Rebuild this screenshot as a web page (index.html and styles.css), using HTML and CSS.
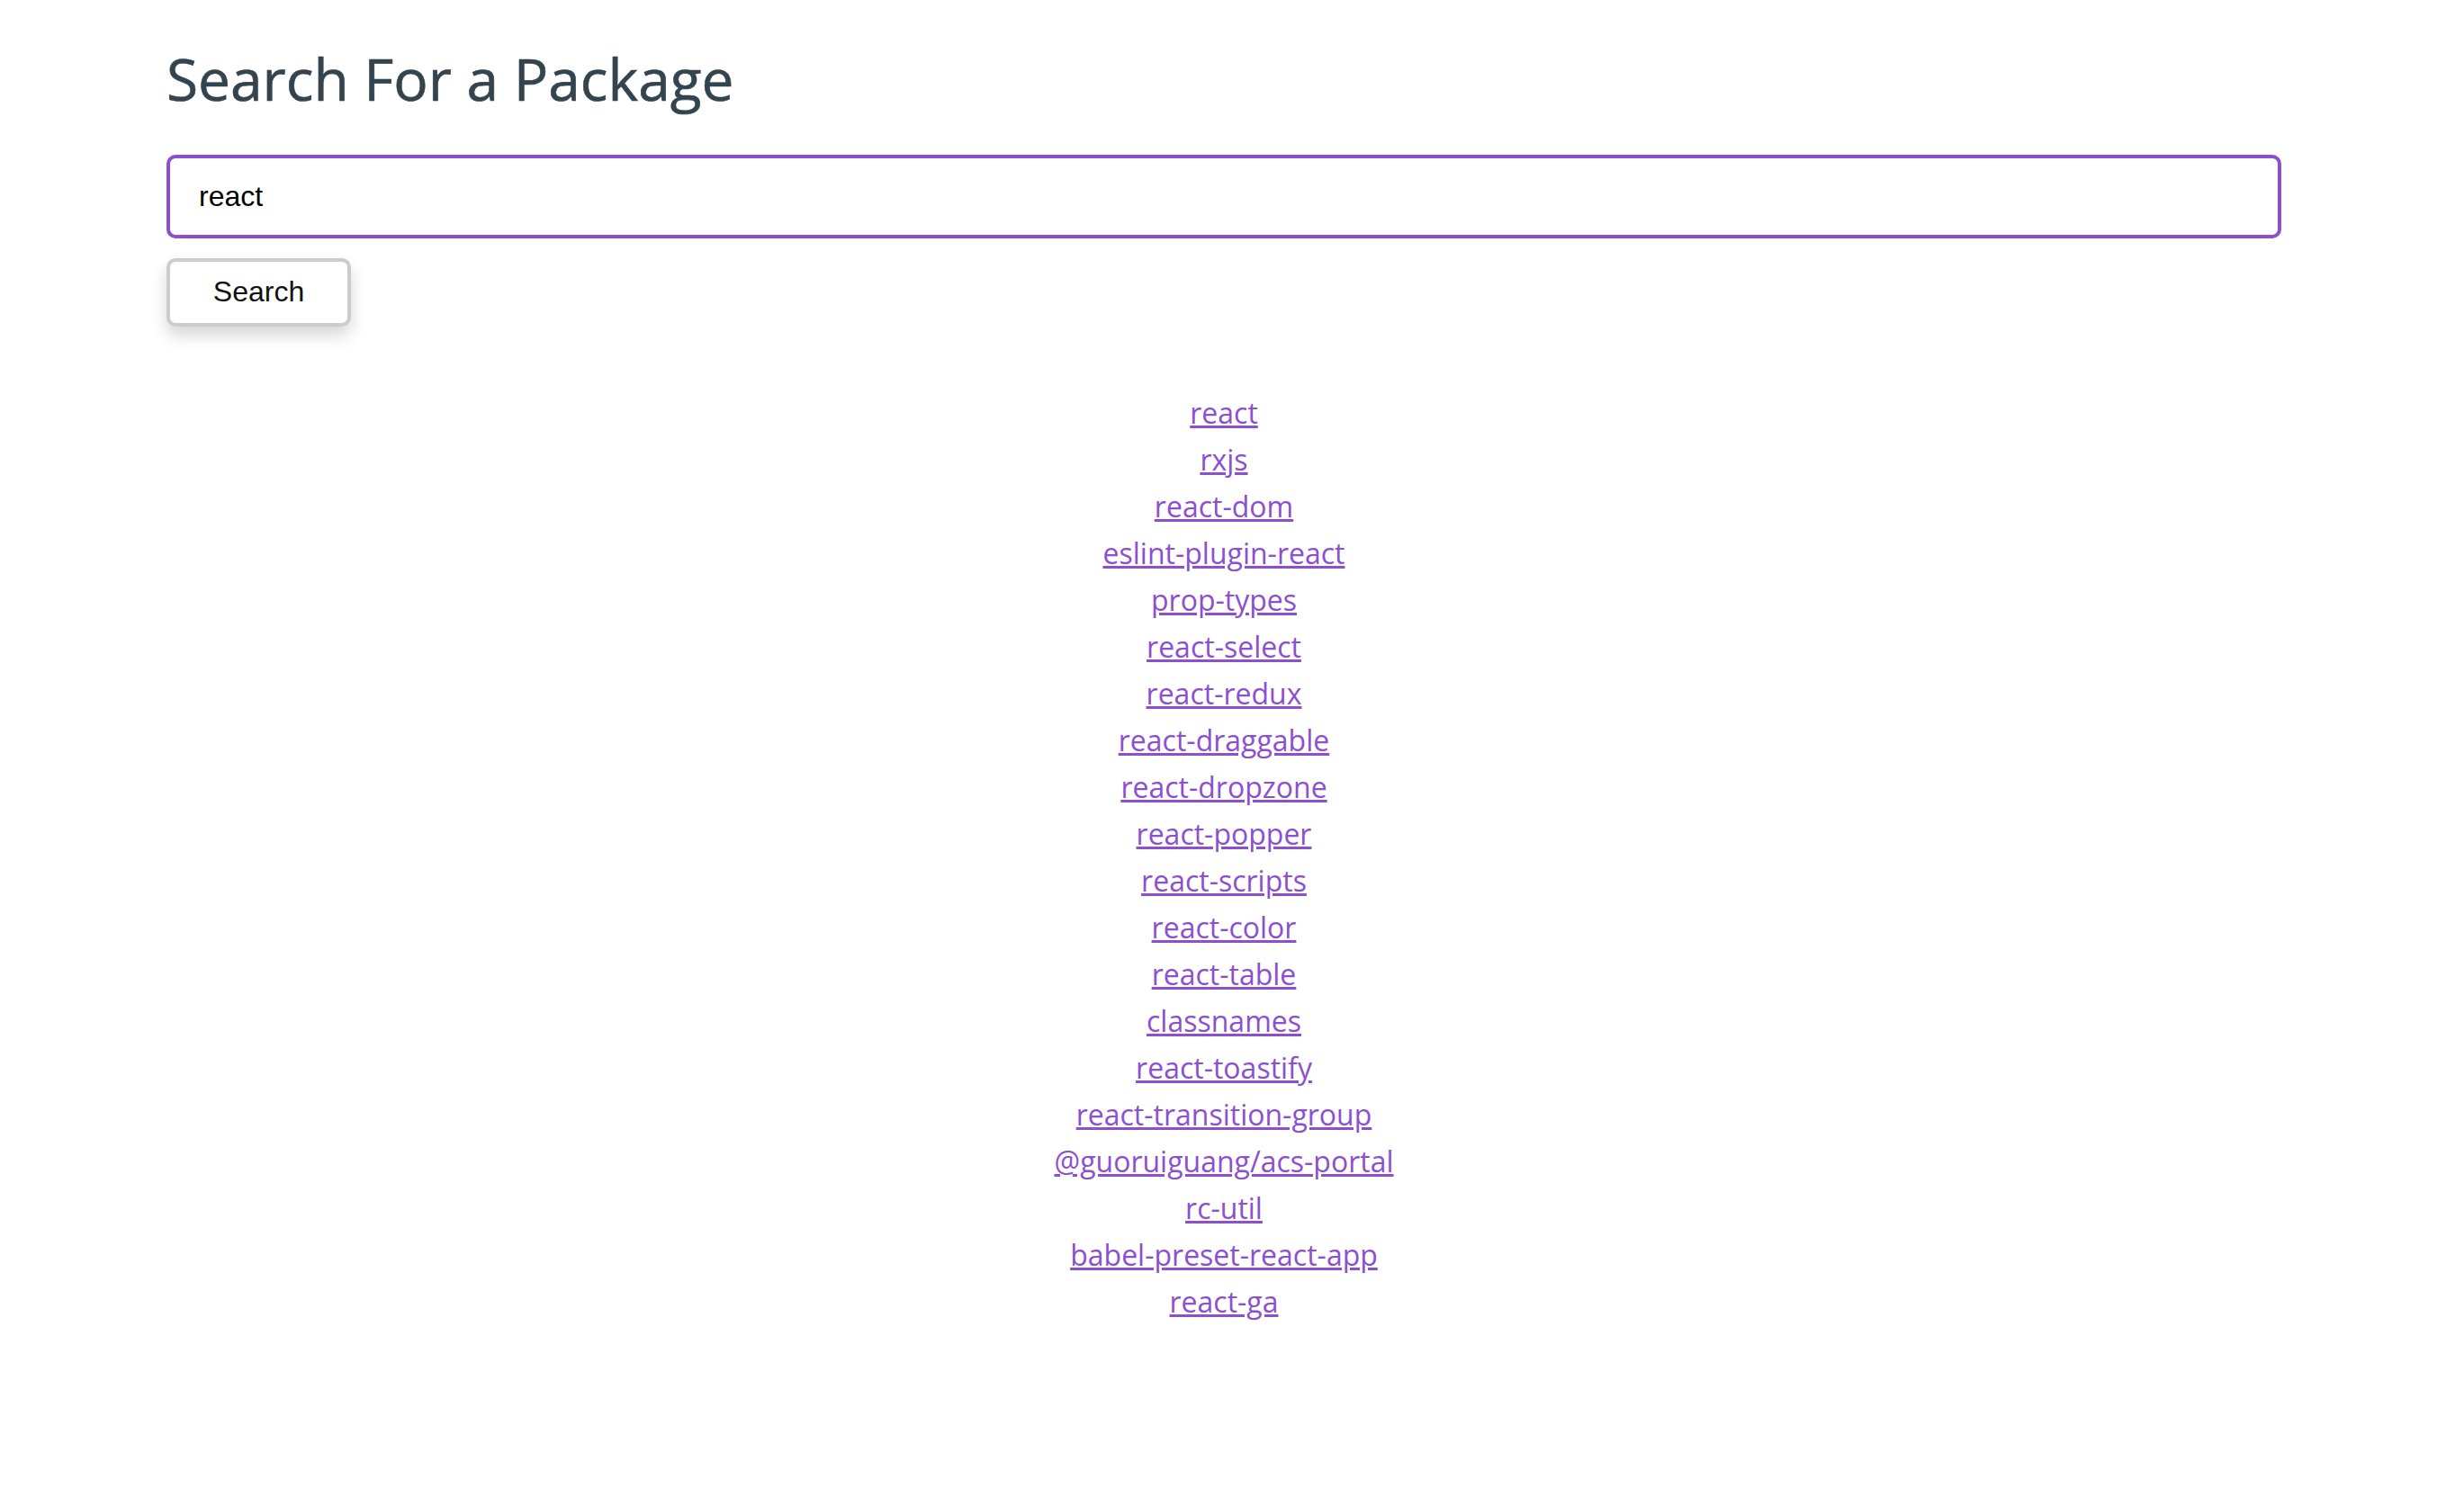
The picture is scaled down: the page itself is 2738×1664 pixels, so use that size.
FILE: index.html
```html
<!DOCTYPE html>
<html lang="en">
<head>
<meta charset="utf-8">
<title>Search For a Package</title>
<link rel="stylesheet" href="styles.css">
</head>
<body>
<main class="page">
  <h1 class="title">Search For a Package</h1>
  <form class="search" onsubmit="return false">
    <input class="search-input" type="text" value="react">
    <button class="search-button" type="submit">Search</button>
  </form>
  <ul class="results">
    <li><a href="#">react</a></li>
    <li><a href="#">rxjs</a></li>
    <li><a href="#">react-dom</a></li>
    <li><a href="#">eslint-plugin-react</a></li>
    <li><a href="#">prop-types</a></li>
    <li><a href="#">react-select</a></li>
    <li><a href="#">react-redux</a></li>
    <li><a href="#">react-draggable</a></li>
    <li><a href="#">react-dropzone</a></li>
    <li><a href="#">react-popper</a></li>
    <li><a href="#">react-scripts</a></li>
    <li><a href="#">react-color</a></li>
    <li><a href="#">react-table</a></li>
    <li><a href="#">classnames</a></li>
    <li><a href="#">react-toastify</a></li>
    <li><a href="#">react-transition-group</a></li>
    <li><a href="#">@guoruiguang/acs-portal</a></li>
    <li><a href="#">rc-util</a></li>
    <li><a href="#">babel-preset-react-app</a></li>
    <li><a href="#">react-ga</a></li>
  </ul>
</main>
</body>
</html>
```
FILE: styles.css
```css
html, body {
  margin: 0;
  padding: 0;
  background: #ffffff;
}

.page {
  padding: 44px 203px 40px 185px;
  font-family: "Open Sans", "Liberation Sans", sans-serif;
}

.title {
  margin: 0 0 41px;
  font-size: 64px;
  font-weight: 500;
  line-height: 87px;
  color: #34444f;
  -webkit-text-stroke: 0.6px #34444f;
}

.search {
  display: flex;
  flex-direction: column;
  align-items: flex-start;
  gap: 22px;
}

.search-input {
  display: block;
  box-sizing: border-box;
  width: 100%;
  height: 93px;
  margin: 0;
  padding: 0 32px;
  border: 4px solid #8c4fd0;
  border-radius: 10px;
  outline: none;
  font-family: "Liberation Sans", Arial, sans-serif;
  font-size: 32px;
  color: #000000;
  background: #ffffff;
}

.search-button {
  box-sizing: border-box;
  width: 205px;
  height: 76px;
  margin: 0;
  padding: 0 0 2px;
  border: 4px solid #cccccc;
  border-radius: 10px;
  background: #ffffff;
  font-family: "Liberation Sans", Arial, sans-serif;
  font-size: 32px;
  color: #111111;
  box-shadow: 0 10px 18px rgba(0, 0, 0, 0.16);
  cursor: pointer;
}

.results {
  list-style: none;
  margin: 70px 0 0;
  padding: 0;
  text-align: center;
}

.results li {
  font-size: 32px;
  line-height: 52px;
}

.results a {
  color: #8c4fd0;
  text-decoration: underline;
}
```
